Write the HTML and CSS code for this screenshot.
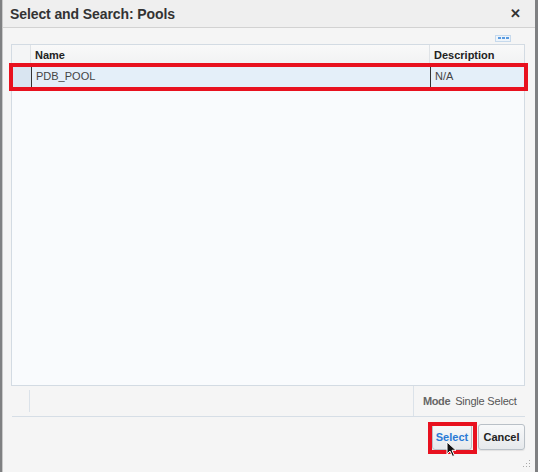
FILE: index.html
```html
<!DOCTYPE html>
<html>
<head>
<meta charset="utf-8">
<link rel="stylesheet" href="styles.css">
</head>
<body>
<div class="dialog">
  <div class="titlebar">
    <span class="title">Select and Search: Pools</span>
    <span class="close">✕</span>
  </div>
  <div class="content">
    <div class="toolbar">
      <span class="more"><i></i><i></i><i></i></span>
    </div>
    <div class="table">
      <div class="thead">
        <div class="sel"></div>
        <div class="th">Name</div>
        <div class="th">Description</div>
      </div>
      <div class="trow">
        <div class="sel"></div>
        <div class="td focus">PDB_POOL</div>
        <div class="td focus">N/A</div>
      </div>
      <div class="tbody-fill"></div>
    </div>
    <div class="footer">
      <div class="fcell first"></div>
      <div class="fspacer"></div>
      <div class="fcell mode"><span class="mlabel">Mode</span><span>Single Select</span></div>
    </div>
    <div class="buttons">
      <button class="btn primary">Select</button>
      <button class="btn cancel">Cancel</button>
    </div>
  </div>
  <div class="grip"></div>
  <div class="mark mark-row"></div>
  <div class="mark mark-btn"></div>
  <svg class="cursor" width="12" height="18" viewBox="0 0 12 18">
    <path d="M1 1 L1 13 L4 10 L6.5 15.5 L8.5 14.6 L6 9.3 L10 9.3 Z" fill="#111" stroke="#fff" stroke-width="1"/>
  </svg>
</div>
</body>
</html>
```
FILE: styles.css
```css
html, body {
  margin: 0;
  padding: 0;
}
body {
  width: 538px;
  height: 472px;
  background: #7f8082;
  font-family: "Liberation Sans", Arial, sans-serif;
  overflow: hidden;
}
.dialog {
  position: relative;
  margin: 0 3px 0 2px;
  height: 472px;
  background: #f6f6f6;
  border-left: 1px solid #c9c9c9;
  box-sizing: border-box;
  display: flex;
  flex-direction: column;
}
.titlebar {
  height: 27px;
  flex: none;
  background: #efefef;
  border-bottom: 1px solid #d2d2d2;
  display: flex;
  align-items: center;
  justify-content: space-between;
  padding: 0 14px 0 7px;
}
.title {
  font-size: 14px;
  font-weight: bold;
  color: #333;
  letter-spacing: -0.1px;
  margin-top: 1px;
}
.close {
  font-size: 13px;
  font-weight: bold;
  color: #333;
}
.content {
  flex: 1;
  display: flex;
  flex-direction: column;
  padding: 0 10px 0 8px;
  background: #f5f5f5;
}
.toolbar {
  height: 16px;
  display: flex;
  justify-content: flex-end;
  align-items: center;
  padding-right: 14px;
}
.more {
  width: 14px;
  height: 5px;
  border: 1px solid #c6d9ec;
  background: #eef4fa;
  display: flex;
  justify-content: center;
  align-items: center;
  gap: 1px;
  margin-top: 4px;
}
.more i {
  width: 3px;
  height: 2px;
  background: #5a9be0;
}
.table {
  height: 342px;
  border: 1px solid #d3dbe3;
  background: #f9fbfd;
  display: flex;
  flex-direction: column;
  box-sizing: border-box;
}
.thead, .trow {
  display: grid;
  grid-template-columns: 19px 399px 1fr;
}
.thead {
  height: 19px;
  background: linear-gradient(#f9f9f9, #f1f2f3);
  border-bottom: 1px solid #e0e4e8;
}
.thead .sel {
  border-right: 1px solid #dfe3e7;
  background: #f4f5f6;
}
.th {
  font-size: 11px;
  font-weight: bold;
  color: #222;
  padding: 4px 0 0 4px;
  border-right: 1px solid #dfe3e7;
}
.th:last-child {
  border-right: 0;
}
.trow {
  height: 23px;
  background: #e4eff9;
  border-bottom: 1px solid #d7e3ee;
}
.trow .sel {
  background: #d9e5f1;
}
.td {
  font-size: 11px;
  color: #444;
  padding: 5px 0 0 4px;
  border-left: 1px solid #333;
}
.tbody-fill {
  flex: 1;
}
.footer {
  height: 31px;
  display: flex;
  border-bottom: 1px solid #d6dee6;
  box-sizing: border-box;
  margin: 0 0 0 1px;
}
.fcell.first {
  width: 17px;
  border-right: 1px solid #dbe2e9;
  margin: 4px 0;
}
.fspacer {
  flex: 1;
}
.mode {
  width: 112px;
  flex: none;
  border-left: 1px solid #dbe2e9;
  font-size: 11px;
  color: #555;
  display: flex;
  align-items: center;
  padding-left: 9px;
  gap: 5px;
  box-sizing: border-box;
  white-space: nowrap;
  letter-spacing: -0.2px;
}
.mlabel {
  color: #666;
  font-weight: bold;
  letter-spacing: -0.4px;
}
.buttons {
  display: flex;
  justify-content: flex-end;
  gap: 6px;
  padding: 7px 0 0 0;
}
.btn {
  height: 26px;
  padding: 0;
  font-family: "Liberation Sans", Arial, sans-serif;
  font-size: 11px;
  font-weight: bold;
  color: #222;
  background: linear-gradient(#f8f9fa, #e6e9ec);
  border: 1px solid #b9c0c7;
  border-radius: 3px;
  box-shadow: 0 1px 1px rgba(0,0,0,0.08);
  text-align: center;
}
.btn.primary {
  color: #2a7ad6;
  width: 40px;
}
.btn.cancel {
  width: 47px;
}
.grip {
  position: absolute;
  right: 5px;
  bottom: 5px;
  width: 8px;
  height: 8px;
  background-image: radial-gradient(circle, #a9a9a9 0.8px, transparent 1px);
  background-size: 3px 3px;
  clip-path: polygon(100% 0, 100% 100%, 0 100%);
}
.mark {
  position: absolute;
  border: 4px solid #e8111f;
  box-sizing: border-box;
}
.mark-row {
  left: 6px;
  top: 63px;
  width: 519px;
  height: 28px;
}
.mark-btn {
  left: 425px;
  top: 422px;
  width: 49px;
  height: 32px;
}
.cursor {
  position: absolute;
  left: 443px;
  top: 441px;
}
```
